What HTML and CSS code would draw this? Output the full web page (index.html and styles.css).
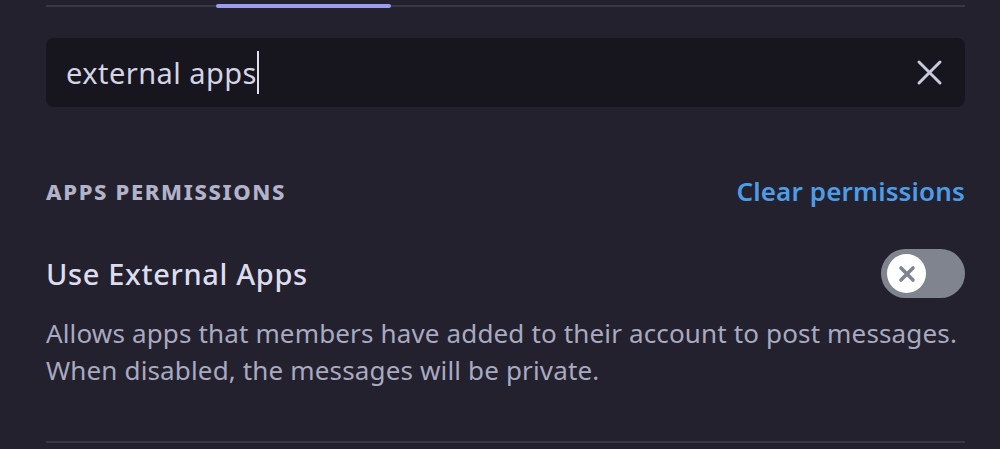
FILE: index.html
```html
<!DOCTYPE html>
<html lang="en">
<head>
<meta charset="utf-8">
<title>Apps Permissions</title>
<link rel="stylesheet" href="styles.css">
</head>
<body>
<div class="panel">
  <div class="tabbar"><div class="tab-indicator"></div></div>
  <div class="search">
    <div class="search-text">external apps<span class="caret"></span></div>
    <svg class="clear-icon" width="27" height="27" viewBox="0 0 27 27" aria-hidden="true">
      <path d="M3 3 L24 24 M24 3 L3 24" stroke="#c9c9dd" stroke-width="3" stroke-linecap="round" fill="none"/>
    </svg>
  </div>
  <div class="section-head">
    <h2 class="section-title">APPS PERMISSIONS</h2>
    <a class="clear-link">Clear permissions</a>
  </div>
  <div class="perm-row">
    <div class="perm-title">Use External Apps</div>
    <div class="toggle">
      <div class="knob">
        <svg width="22" height="22" viewBox="0 0 22 22" aria-hidden="true">
          <path d="M5 5 L17 17 M17 5 L5 17" stroke="#80848e" stroke-width="3.6" stroke-linecap="round" fill="none"/>
        </svg>
      </div>
    </div>
  </div>
  <p class="perm-desc">Allows apps that members have added to their account to post messages.<br>When disabled, the messages will be private.</p>
  <div class="divider"></div>
</div>
</body>
</html>
```
FILE: styles.css
```css
html, body {
  margin: 0;
  padding: 0;
  background: #22212d;
}
body {
  font-family: "Noto Sans", "Open Sans", sans-serif;
  overflow: hidden;
}
.panel {
  width: 919px;
  margin-left: 46px;
  display: flex;
  flex-direction: column;
}
.tabbar {
  margin-top: 5px;
  height: 2px;
  background: #393846;
  display: flex;
  align-items: center;
}
.tab-indicator {
  margin-left: 170px;
  width: 175px;
  height: 4px;
  border-radius: 2px;
  background: #9b9cf3;
}
.search {
  margin-top: 31px;
  height: 69px;
  border-radius: 8px;
  background: #17161f;
  display: flex;
  align-items: center;
  justify-content: space-between;
  padding: 0 22px 0 20px;
}
.search-text {
  font-size: 29px;
  letter-spacing: 0.45px;
  color: #d4d4e4;
  display: flex;
  align-items: center;
}
.caret {
  display: inline-block;
  width: 2px;
  height: 43px;
  background: #e0e0f0;
  margin-left: 0;
}
.clear-icon {
  display: block;
}
.section-head {
  margin-top: 68px;
  height: 32px;
  display: flex;
  align-items: center;
  justify-content: space-between;
}
.section-title {
  margin: 0;
  font-size: 22px;
  font-weight: 800;
  letter-spacing: 1.65px;
  color: #b2b2c9;
}
.clear-link {
  font-size: 26px;
  font-weight: 600;
  letter-spacing: 0.15px;
  color: #4f9ce6;
}
.perm-row {
  margin-top: 42px;
  height: 49px;
  display: flex;
  align-items: center;
  justify-content: space-between;
}
.perm-title {
  font-size: 29px;
  font-weight: 500;
  letter-spacing: 0.65px;
  color: #dcdcee;
}
.toggle {
  width: 84px;
  height: 49px;
  border-radius: 25px;
  background: #80848e;
  display: flex;
  align-items: center;
  padding-left: 6px;
  box-sizing: border-box;
}
.knob {
  width: 39px;
  height: 39px;
  border-radius: 50%;
  background: #ffffff;
  display: flex;
  align-items: center;
  justify-content: center;
}
.knob svg {
  display: block;
}
.perm-desc {
  margin: 17px 0 0;
  font-size: 26px;
  line-height: 37px;
  letter-spacing: 0.15px;
  color: #a9a9c1;
}
.divider {
  margin-top: 52px;
  height: 2px;
  background: #393846;
}
```
